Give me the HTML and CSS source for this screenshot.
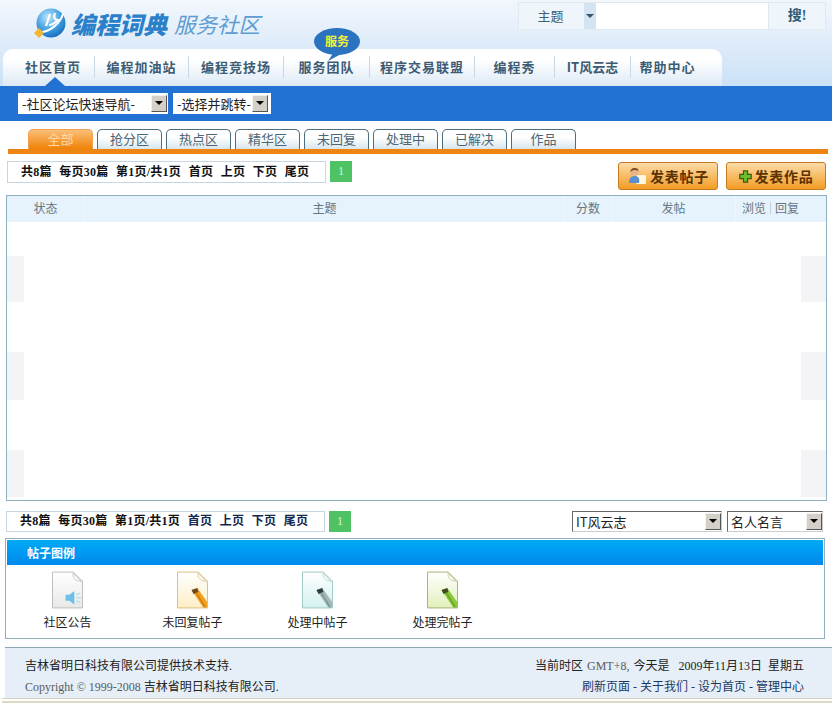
FILE: index.html
```html
<!DOCTYPE html>
<html lang="zh-CN">
<head>
    <meta charset="UTF-8">
    <title>编程词典 服务社区</title>
    <link rel="stylesheet" href="styles.css">
</head>
<body>

    <!-- Header -->
    <div class="top">
        <div class="top-row">
            <div class="logo">
                <svg class="logo-globe" width="34" height="32" viewBox="0 0 34 32">
                    <defs>
                        <radialGradient id="globe" cx="0.4" cy="0.3" r="0.8">
                            <stop offset="0" stop-color="#bfe6fb"/>
                            <stop offset="0.55" stop-color="#3f9fe0"/>
                            <stop offset="1" stop-color="#0f5fb4"/>
                        </radialGradient>
                    </defs>
                    <circle cx="18" cy="15" r="14.5" fill="url(#globe)"/>
                    <path d="M9 24C17 23 27 16 30 6" fill="none" stroke="#fff" stroke-width="2"/>
                    <path d="M17 6L13 18M22 5C20 10 22 12 25 12C22 15 19 17 16 17" fill="none" stroke="#fff" stroke-width="2.2"/>
                    <path d="M1 25L6 20L11 25L6 30Z" fill="#f2b632"/>
                </svg>
                <span class="logo-main">编程词典</span>
                <span class="logo-sub">服务社区</span>
            </div>
            <div class="search">
                <div class="search-type">主题</div>
                <div class="search-arrow"></div>
                <div class="search-input"></div>
                <div class="search-btn">搜!</div>
            </div>
        </div>

        <div class="nav">
            <div class="nav-item nav-home">社区首页</div>
            <div class="nav-item">编程加油站</div>
            <div class="nav-item">编程竞技场</div>
            <div class="nav-item">服务团队</div>
            <div class="nav-item">程序交易联盟</div>
            <div class="nav-item">编程秀</div>
            <div class="nav-item nav-it">IT风云志</div>
            <div class="nav-item nav-last">帮助中心</div>
        </div>

        <div class="nav-pointer"></div>
        <div class="bubble">
            <svg width="46" height="34" viewBox="0 0 46 34">
                <ellipse cx="23" cy="13.5" rx="23" ry="13.5" fill="#2c73bf"/>
                <path d="M20 24L14 33L29 25Z" fill="#2c73bf"/>
            </svg>
            <span class="bubble-text">服务</span>
        </div>
    </div>

    <!-- Quick nav band -->
    <div class="band">
        <div class="sel sel-forum"><span class="sel-text">-社区论坛快速导航-</span><span class="sel-arrow"></span></div>
        <div class="sel sel-jump"><span class="sel-text">-选择并跳转-</span><span class="sel-arrow"></span></div>
    </div>

    <!-- Tabs -->
    <div class="tabs">
        <div class="tab active">全部</div>
        <div class="tab">抢分区</div>
        <div class="tab">热点区</div>
        <div class="tab">精华区</div>
        <div class="tab">未回复</div>
        <div class="tab">处理中</div>
        <div class="tab">已解决</div>
        <div class="tab">作品</div>
    </div>
    <div class="tab-line"></div>

    <!-- Upper toolbar -->
    <div class="toolbar">
        <div class="pager">
            <span>共8篇</span><span>每页30篇</span><span>第1页/共1页</span><span>首页</span><span>上页</span><span>下页</span><span>尾页</span>
        </div>
        <div class="page-num">1</div>
        <div class="post-btns">
            <div class="post-btn">
                <svg width="20" height="20" viewBox="0 0 20 20">
                    <rect x="9" y="9" width="10" height="9" rx="1" fill="#fff6dc"/>
                    <path d="M2 17C2 11 5 10 8 10C11 10 13 12 12 17Z" fill="#5b8fd0"/>
                    <circle cx="7.5" cy="6" r="4" fill="#e9b48c"/>
                    <path d="M3.5 6C3 1 12 1 11.5 5C9 3.500 6 3.500 3.500 6Z" fill="#7a4a24"/>
                </svg>
                发表帖子
            </div>
            <div class="post-btn">
                <svg width="13" height="13" viewBox="0 0 16 16">
                    <path d="M5.500 1H10.500V5.500H15V10.500H10.500V15H5.500V10.500H1V5.500H5.500Z" fill="#6cc02c" stroke="#3d5a10" stroke-width="1.500"/>
                </svg>
                发表作品
            </div>
        </div>
    </div>

    <!-- Topic list -->
    <div class="list">
        <div class="list-head">
            <div>状态</div>
            <div>主题</div>
            <div>分数</div>
            <div>发帖</div>
            <div class="head-views">浏览<i></i>回复</div>
        </div>
        <div class="list-body">
            <div class="row"></div>
            <div class="row striped"></div>
            <div class="row"></div>
            <div class="row striped"></div>
            <div class="row"></div>
            <div class="row striped"></div>
        </div>
    </div>

    <!-- Lower toolbar -->
    <div class="toolbar-low">
        <div class="pager pager-low">
            <span>共8篇</span><span>每页30篇</span><span>第1页/共1页</span><span class="link">首页</span><span class="link">上页</span><span class="link">下页</span><span class="link">尾页</span>
        </div>
        <div class="page-num">1</div>
        <div class="low-sels">
            <div class="sel sel-it"><span class="sel-text">IT风云志</span><span class="sel-arrow"></span></div>
            <div class="sel sel-quote"><span class="sel-text">名人名言</span><span class="sel-arrow"></span></div>
        </div>
    </div>

    <!-- Legend -->
    <div class="legend">
        <div class="legend-head">帖子图例</div>
        <div class="legend-items">
            <div class="legend-item">
                <svg width="31" height="38" viewBox="0 0 32 38">
                    <defs>
                        <linearGradient id="docGrey" x1="0" y1="0" x2="0" y2="1">
                            <stop offset="0" stop-color="#fff"/><stop offset="1" stop-color="#e8e8e8"/>
                        </linearGradient>
                    </defs>
                    <path d="M.5.500H22L31.500 10V37.500H.5Z" fill="url(#docGrey)" stroke="#bdbdbd"/>
                    <path d="M22 .5C21 6 23 10 31.500 10C27 8 24 5 22 .5Z" fill="#fff" stroke="#c4c4c4"/>
                    <path d="M14 24H18L23 20V34L18 30H14Z" fill="#6cc0e8"/>
                    <path d="M25 24L29 22M25 27H30M25 30L29 32" stroke="#a8dcf4" stroke-width="1.200"/>
                </svg>
                <span>社区公告</span>
            </div>
            <div class="legend-item">
                <svg width="31" height="38" viewBox="0 0 32 38">
                    <defs>
                        <linearGradient id="docOrange" x1="0" y1="0" x2="0" y2="1">
                            <stop offset="0" stop-color="#fff"/><stop offset="1" stop-color="#fdeec6"/>
                        </linearGradient>
                    </defs>
                    <path d="M.5.500H22L31.500 10V37.500H.5Z" fill="url(#docOrange)" stroke="#d8bf7c"/>
                    <path d="M22 .5C21 6 23 10 31.500 10C27 8 24 5 22 .5Z" fill="#fff" stroke="#d8c99c"/>
                    <path d="M15 19L21 17L31 31V37H27Z" fill="#f0a21e"/>
                    <path d="M15 19L21 17L22 21L17 23Z" fill="#6b4a2a"/>
                    <path d="M20 22L29 37" stroke="#d07c10" stroke-width="1.500"/>
                </svg>
                <span>未回复帖子</span>
            </div>
            <div class="legend-item">
                <svg width="31" height="38" viewBox="0 0 32 38">
                    <defs>
                        <linearGradient id="docTeal" x1="0" y1="0" x2="0" y2="1">
                            <stop offset="0" stop-color="#fff"/><stop offset="1" stop-color="#d4f0f0"/>
                        </linearGradient>
                    </defs>
                    <path d="M.5.500H22L31.500 10V37.500H.5Z" fill="url(#docTeal)" stroke="#9cc8c4"/>
                    <path d="M22 .5C21 6 23 10 31.500 10C27 8 24 5 22 .5Z" fill="#fff" stroke="#b4d4d0"/>
                    <path d="M15 19L21 17L31 31V37H27Z" fill="#a4b8b8"/>
                    <path d="M15 19L21 17L22 21L17 23Z" fill="#2c3c40"/>
                    <path d="M20 22L29 37" stroke="#7c9494" stroke-width="1.500"/>
                </svg>
                <span>处理中帖子</span>
            </div>
            <div class="legend-item">
                <svg width="31" height="38" viewBox="0 0 32 38">
                    <defs>
                        <linearGradient id="docGreen" x1="0" y1="0" x2="0" y2="1">
                            <stop offset="0" stop-color="#fff"/><stop offset="1" stop-color="#e2f0bc"/>
                        </linearGradient>
                    </defs>
                    <path d="M.5.500H22L31.500 10V37.500H.5Z" fill="url(#docGreen)" stroke="#a8b070"/>
                    <path d="M22 .5C21 6 23 10 31.500 10C27 8 24 5 22 .5Z" fill="#fff" stroke="#c4cc9c"/>
                    <path d="M15 19L21 17L31 31V37H27Z" fill="#8cc83c"/>
                    <path d="M15 19L21 17L22 21L17 23Z" fill="#3c4c20"/>
                    <path d="M20 22L29 37" stroke="#68a428" stroke-width="1.500"/>
                </svg>
                <span>处理完帖子</span>
            </div>
        </div>
    </div>

    <!-- Footer -->
    <div class="footer">
        <div class="footer-left">
            <p>吉林省明日科技有限公司提供技术支持.</p>
            <p><span class="grey">Copyright © 1999-2008</span> 吉林省明日科技有限公司.</p>
        </div>
        <div class="footer-right">
            <p>当前时区 <span class="grey tz">GMT+8,</span> 今天是&nbsp;&nbsp;&nbsp;2009年11月13日&nbsp;&nbsp;星期五</p>
            <p class="footer-links">刷新页面 - 关于我们 - 设为首页 - 管理中心</p>
        </div>
    </div>
    <div class="footer-rule"></div>

</body>
</html>
```

FILE: styles.css
```css
/* Base */
body {
    margin: 0;
    background: #fff;
    font-family: "Liberation Serif", "Noto Sans CJK SC", serif;
    font-size: 12px;
    color: #222;
}
p {
    margin: 0;
}

/* Header */
.top {
    position: relative;
    height: 86px;
    background: linear-gradient(#f2f7fc, #cbe1f7);
}
.top-row {
    display: flex;
    height: 49px;
}
.logo {
    display: flex;
    align-items: center;
    height: 48px;
    padding-left: 33px;
    font-family: "Noto Sans CJK SC", sans-serif;
    font-style: italic;
}
.logo-globe {
    margin-right: 4px;
}
.logo-main {
    font-size: 24px;
    font-weight: 900;
    color: #2a80c9;
    margin-right: 7px;
    line-height: 48px;
}
.logo-sub {
    font-size: 21.500px;
    color: #5d9dd4;
    line-height: 48px;
}
.search {
    display: flex;
    margin: 2px 6px 0 auto;
    width: 308px;
    height: 28px;
    box-sizing: border-box;
    border: 1px solid #dfe9f2;
    background: #eef5fb;
}
.search-type {
    width: 65px;
    padding-right: 2px;
    box-sizing: border-box;
    text-align: center;
    line-height: 26px;
    font-family: "Noto Sans CJK SC", sans-serif;
    font-size: 13px;
    color: #3f5f74;
}
.search-arrow {
    position: relative;
    width: 12px;
    background: #d5e4f2;
}
.search-arrow::after {
    content: "";
    position: absolute;
    left: 2px;
    top: 11px;
    border: 4px solid transparent;
    border-top: 4px solid #33566e;
}
.search-input {
    width: 172px;
    background: #fff;
}
.search-btn {
    flex: 1;
    text-align: center;
    line-height: 26px;
    font-size: 14px;
    font-weight: bold;
    color: #2f5b75;
    border-left: 1px solid #dfe9f2;
}

/* Main nav */
.nav {
    display: grid;
    grid-template-columns: 92px 94px 95px 86px 105px 80px 76px 91px;
    align-items: center;
    margin-left: 3px;
    width: 719px;
    height: 37px;
    box-sizing: border-box;
    padding-bottom: 1px;
    border-radius: 10px 10px 0 0;
    background: linear-gradient(#fff 30%, #dce9f5);
    font-family: "Noto Sans CJK SC", sans-serif;
    font-size: 13px;
    font-weight: bold;
    letter-spacing: 1px;
    color: #3d5c74;
}
.nav-item {
    height: 22px;
    line-height: 22px;
    text-align: center;
    border-right: 1px solid #c9d8e5;
}
.nav-home {
    padding-left: 9px;
}
.nav-it {
    letter-spacing: 0;
}
.nav-last {
    border-right: none;
    padding-right: 18px;
}
.nav-pointer {
    position: absolute;
    left: 45px;
    bottom: 0;
    border-left: 10px solid transparent;
    border-right: 10px solid transparent;
    border-bottom: 9px solid #2272d3;
}
.bubble {
    position: absolute;
    left: 314px;
    top: 28px;
    width: 46px;
    height: 34px;
}
.bubble svg {
    display: block;
}
.bubble-text {
    position: absolute;
    left: 0;
    right: 0;
    top: 5px;
    text-align: center;
    font-family: "Noto Sans CJK SC", sans-serif;
    font-size: 12px;
    line-height: 16px;
    font-weight: bold;
    color: #f5ee3a;
}

/* Blue band */
.band {
    display: flex;
    gap: 5px;
    height: 35px;
    box-sizing: border-box;
    padding: 7px 0 0 18px;
    background: #2272d3;
}

/* Fake windows selects */
.sel {
    display: flex;
    align-items: center;
    justify-content: space-between;
    box-sizing: border-box;
    height: 21px;
    padding: 0 0 0 3px;
    background: #fff;
    border: 1px solid #fff;
    font-family: "Noto Sans CJK SC", sans-serif;
    font-size: 13px;
    color: #222;
}
.sel-forum {
    width: 150px;
}
.sel-jump {
    width: 98px;
    padding-right: 2px;
}
.sel-it {
    width: 150px;
    border-color: #666 #ccc #ccc #666;
}
.sel-quote {
    width: 96px;
    border-color: #666 #ccc #ccc #666;
}
.sel-arrow {
    position: relative;
    width: 16px;
    height: 17px;
    box-sizing: border-box;
    background: #d4d0c8;
    border: 1px solid;
    border-color: #f2f2f2 #555 #555 #f2f2f2;
}
.sel-arrow::after {
    content: "";
    position: absolute;
    left: 3px;
    top: 5px;
    border: 4px solid transparent;
    border-top: 4px solid #000;
}

/* Tabs */
.tabs {
    display: flex;
    gap: 4px;
    margin-top: 8px;
    padding-left: 28px;
}
.tab {
    width: 65px;
    height: 20px;
    box-sizing: border-box;
    border: 1px solid #4c6f7f;
    border-bottom: none;
    border-radius: 5px 5px 0 0;
    background: linear-gradient(#fff 40%, #d6e6ee);
    text-align: center;
    line-height: 18px;
    font-family: "Noto Sans CJK SC", sans-serif;
    font-size: 13px;
    color: #4d6574;
}
.tab.active {
    border-color: #f0a050;
    background: linear-gradient(#fbbf78, #f08206);
    color: #fdd9a8;
}
.tab-line {
    margin-left: 8px;
    width: 820px;
    height: 5px;
    background: #ee8512;
}

/* Toolbars */
.toolbar {
    display: flex;
    align-items: flex-start;
    margin-top: 7px;
    height: 29px;
    padding-left: 7px;
}
.pager {
    display: flex;
    gap: 7.500px;
    box-sizing: border-box;
    width: 319px;
    height: 22px;
    padding-left: 13px;
    border: 1px solid #c6d6e2;
    line-height: 20px;
    font-weight: bold;
    letter-spacing: .25px;
    color: #111;
}
.page-num {
    width: 22px;
    height: 21px;
    margin-left: 4px;
    background: #4fc264;
    text-align: center;
    line-height: 21px;
    color: #d8f4d0;
}
.post-btns {
    display: flex;
    gap: 8px;
    margin: 1px 6px 0 auto;
}
.post-btn {
    display: flex;
    align-items: center;
    justify-content: center;
    gap: 3px;
    width: 100px;
    height: 28px;
    box-sizing: border-box;
    border: 1px solid #c47c1e;
    border-radius: 3px;
    background: linear-gradient(#fcdca8, #f39c24);
    font-family: "Noto Sans CJK SC", sans-serif;
    font-size: 14px;
    font-weight: bold;
    letter-spacing: .7px;
    color: #5c3200;
}

/* Topic list */
.list {
    margin: 5px 0 0 6px;
    width: 821px;
    height: 306px;
    box-sizing: border-box;
    border: 1px solid #8fb0bf;
}
.list-head {
    display: grid;
    grid-template-columns: 78px 480px 47px 124px 1fr;
    gap: 0;
    height: 26px;
    background: #e6f3fc;
    line-height: 23px;
    text-align: center;
    font-family: "Noto Sans CJK SC", sans-serif;
    font-size: 12px;
    color: #67767e;
}
.list-head > div {
    border-right: 1px solid #eef7fd;
}
.list-head > .head-views {
    display: flex;
    align-items: center;
    height: 23px;
    padding-left: 6px;
    gap: 4px;
    border-right: none;
}
.head-views i {
    width: 1px;
    height: 12px;
    background: #c4d0d8;
}
.list-body {
    display: grid;
    grid-template-rows: 34px 46px 50px 48px 50px 47px;
}
.row.striped {
    background: linear-gradient(90deg, #f4f4f6 17px, #fff 17px, #fff 794px, #f4f4f6 794px);
}

/* Lower toolbar */
.toolbar-low {
    display: flex;
    margin-top: 10px;
    height: 21px;
    padding-left: 6px;
}
.pager-low {
    height: 21px;
    padding-left: 13px;
    border-color: #c6d6e2;
    line-height: 19px;
}
.pager-low .link {
    color: #14284e;
}
.low-sels {
    display: flex;
    gap: 5px;
    margin: 0 9px 0 auto;
}

/* Legend */
.legend {
    margin: 6px 0 0 5px;
    width: 820px;
    height: 101px;
    box-sizing: border-box;
    border: 1px solid #8fb0bf;
    padding: 1px;
}
.legend-head {
    height: 25px;
    padding-left: 20px;
    background: linear-gradient(#00aaf5, #0089ee);
    line-height: 25px;
    font-family: "Noto Sans CJK SC", sans-serif;
    font-weight: bold;
    color: #fff;
}
.legend-items {
    display: flex;
    padding: 6px 0 0 0;
    margin-left: -2px;
}
.legend-item {
    display: flex;
    flex-direction: column;
    align-items: center;
    gap: 4px;
    width: 125px;
    font-family: "Noto Sans CJK SC", sans-serif;
    color: #222;
}

/* Footer */
.footer {
    display: flex;
    justify-content: space-between;
    margin: 8px 0 0 5px;
    height: 51px;
    box-sizing: border-box;
    padding: 8px 28px 0 20px;
    border-top: 1px solid #8ea6b6;
    background: #e6eff7;
    line-height: 21px;
}
.footer-right {
    text-align: right;
}
.footer-links {
    color: #1c3966;
}
.grey {
    color: #5a5a5a;
}
.tz {
    margin: 0 1px;
}
.footer-rule {
    margin-left: 2px;
    height: 5px;
    border-top: 1px solid #d4d0bc;
    border-bottom: 2px solid #ddd9c6;
    box-sizing: border-box;
}
```
